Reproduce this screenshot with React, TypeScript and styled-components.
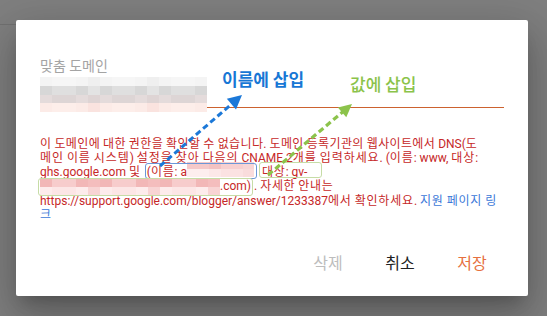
import React from "react";
import styled, { createGlobalStyle } from "styled-components";

const Global = createGlobalStyle`
  html, body { margin: 0; padding: 0; }
  body {
    width: 547px;
    height: 316px;
    overflow: hidden;
    background:
      linear-gradient(to bottom, transparent 24px, #717171 24px, #717171 25px, transparent 25px) no-repeat 0 0 / 16px 100%,
      #7f7f7f;
    font-family: "Roboto", "Noto Sans CJK KR", sans-serif;
  }
`;

const Page = styled.div`
  padding: 20px 0 0 16px;
`;

const Dialog = styled.div`
  position: relative;
  box-sizing: border-box;
  width: 512px;
  height: 276px;
  background: #fff;
  border-radius: 2px;
  box-shadow: 0 11px 15px -7px rgba(0, 0, 0, 0.2), 0 24px 38px 3px rgba(0, 0, 0, 0.14),
    0 9px 46px 8px rgba(0, 0, 0, 0.12);
  padding: 38px 24px 16px;
  display: flex;
  flex-direction: column;
`;

const FieldLabel = styled.div`
  font-size: 14px;
  line-height: 16px;
  color: #a4a4a4;
`;

const Field = styled.div`
  position: relative;
  height: 33px;
  border-bottom: 1px solid #cc622f;
`;

const FieldRedactWrap = styled.div`
  position: absolute;
  left: 0;
  top: 3px;
  line-height: 0;
`;

const RedactGrid = styled.span<{
  $cols: number;
  $rows: number;
  $w: number;
  $h: number;
  $mt: number;
  $mb: number;
}>`
  display: inline-grid;
  grid-template-columns: repeat(${(p) => p.$cols}, 1fr);
  grid-template-rows: repeat(${(p) => p.$rows}, 1fr);
  width: ${(p) => p.$w}px;
  height: ${(p) => p.$h}px;
  vertical-align: top;
  margin-top: ${(p) => p.$mt}px;
  margin-bottom: ${(p) => p.$mb}px;
`;

const Cell = styled.span``;

type RedactProps = {
  cols: number;
  rowColors: string[][];
  w: number;
  h: number;
  mt?: number;
  mb?: number;
};

function Redact({ cols, rowColors, w, h, mt = 0, mb = 0 }: RedactProps) {
  const cells: string[] = [];
  rowColors.forEach((palette, r) => {
    for (let c = 0; c < cols; c++) {
      const k = (c * 7 + r * 3 + ((c * c) % 5)) % palette.length;
      cells.push(palette[k]);
    }
  });
  return (
    <RedactGrid $cols={cols} $rows={rowColors.length} $w={w} $h={h} $mt={mt} $mb={mb}>
      {cells.map((col, i) => (
        <Cell key={i} style={{ background: col }} />
      ))}
    </RedactGrid>
  );
}

const ErrorText = styled.div`
  margin-top: 28.5px;
  font-size: 12px;
  line-height: 14.25px;
  color: #c62828;
  white-space: nowrap;
`;

const Line = styled.div<{ $hs: number }>`
  --hs: ${(p) => p.$hs}px;
`;

const Hangul = styled.span`
  letter-spacing: var(--hs);
`;

function Ko({ text }: { text: string }) {
  const parts = text.split(/([\uAC00-\uD7A3]+)/);
  return (
    <>
      {parts.map((p, i) => (i % 2 ? <Hangul key={i}>{p}</Hangul> : p))}
    </>
  );
}

/* annotation frame drawn over the text, so it does not move the words */
const Boxed = styled.span<{
  $color: string;
  $ml: number;
  $l: number;
  $r: number;
  $t: number;
  $b: number;
}>`
  position: relative;
  margin-left: ${(p) => p.$ml}px;
  &::before {
    content: "";
    position: absolute;
    left: ${(p) => p.$l}px;
    right: ${(p) => p.$r}px;
    top: ${(p) => p.$t}px;
    bottom: ${(p) => p.$b}px;
    border: 1.5px solid ${(p) => p.$color};
    border-radius: 3px;
    pointer-events: none;
  }
`;

const AfterBox = styled.span`
  margin-left: 3px;
`;

const Link = styled.a`
  color: #3b78d8;
  text-decoration: none;
`;

const Actions = styled.div`
  margin-top: auto;
  margin-right: -4px;
  display: flex;
  justify-content: flex-end;
`;

const ActionButton = styled.button<{ $tone: string }>`
  width: 72px;
  height: 36px;
  padding: 0;
  border: none;
  background: none;
  font-family: "Roboto", "Noto Sans CJK KR", sans-serif;
  font-size: 16px;
  color: ${(p) => p.$tone};
  cursor: pointer;
`;

const Overlay = styled.svg`
  position: absolute;
  left: 0;
  top: 0;
  width: 512px;
  height: 276px;
  pointer-events: none;
  overflow: visible;
`;

const Callout = styled.div<{ $x: number; $y: number; $color: string; $weight: number }>`
  position: absolute;
  left: ${(p) => p.$x}px;
  top: ${(p) => p.$y}px;
  font-family: "Noto Sans CJK KR", sans-serif;
  font-size: 17px;
  line-height: 17px;
  font-weight: ${(p) => p.$weight};
  color: ${(p) => p.$color};
  white-space: nowrap;
`;

const fieldRows = [
  ["#f4f4f4", "#f1f1f1", "#eeeeee", "#f6f6f6", "#efefef"],
  ["#dadada", "#dfdfdf", "#e3e3e3", "#d7d7d7", "#e6e6e6"],
  ["#ded4d4", "#e4dbdb", "#d9d0d0", "#e7e0e0", "#ddd5d5"],
  ["#fce9e5", "#fbe4e0", "#fdeeea", "#fae3df", "#fcebe7"],
];

const line3Rows = [
  ["#f5c9c9", "#f7d0d0", "#f3c2c2", "#f8d6d6"],
  ["#fbe2e2", "#fce8e8", "#f9dcdc", "#fdeeee"],
];

const line4Rows = [
  ["#f2b7b7", "#f5c3c3", "#efb0b0", "#f7cccc", "#f4bdbd"],
  ["#fadcdc", "#fce6e6", "#f8d4d4", "#fdecec", "#f9d8d8"],
];

type ArrowProps = {
  x1: number;
  y1: number;
  x2: number;
  y2: number;
  color: string;
  len: number;
  half: number;
  width: number;
};

function Arrow({ x1, y1, x2, y2, color, len, half, width }: ArrowProps) {
  const dx = x2 - x1;
  const dy = y2 - y1;
  const d = Math.hypot(dx, dy);
  const ux = dx / d;
  const uy = dy / d;
  const bx = x2 - ux * len;
  const by = y2 - uy * len;
  const px = -uy * half;
  const py = ux * half;
  return (
    <g>
      <line
        x1={x1}
        y1={y1}
        x2={bx + ux}
        y2={by + uy}
        stroke={color}
        strokeWidth={width}
        strokeDasharray="6 3.5"
      />
      <polygon points={`${x2},${y2} ${bx + px},${by + py} ${bx - px},${by - py}`} fill={color} />
    </g>
  );
}

export default function App() {
  return (
    <>
      <Global />
      <Page>
        <Dialog>
          <FieldLabel>맞춤 도메인</FieldLabel>
          <Field>
            <FieldRedactWrap>
              <Redact cols={14} rowColors={fieldRows} w={167} h={35} />
            </FieldRedactWrap>
          </Field>
          <ErrorText>
            <Line $hs={0.37}>
              <Ko text="이 도메인에 대한 권한을 확인할 수 없습니다. 도메인 등록기관의 웹사이트에서 DNS(도" />
            </Line>
            <Line $hs={0.92}>
              <Ko text="메인 이름 시스템) 설정을 찾아 다음의 CNAME 2개를 입력하세요. (이름: www, 대상:" />
            </Line>
            <Line $hs={0.8}>
              <Ko text="ghs.google.com 및 " />
              <Boxed $color="#6b97d8" $ml={3} $l={-1.5} $r={-3} $t={-2.4} $b={0.3}>
                <Ko text="(이름: a" />
                <Redact cols={6} rowColors={line3Rows} w={67} h={14.4} mt={-2.9} />
              </Boxed>
              <Boxed $color="#c6dca6" $ml={8} $l={-3} $r={-15} $t={-2.7} $b={0.8}>
                <Ko text="대상: gv-" />
              </Boxed>
            </Line>
            <Line $hs={0.7}>
              <Boxed $color="#c6dca6" $ml={0} $l={-2} $r={-1.5} $t={-1.5} $b={-2.3}>
                <Redact cols={15} rowColors={line4Rows} w={180} h={16} mt={-0.5} mb={-2.25} />
                .com)
              </Boxed>
              <AfterBox>
                <Ko text=". 자세한 안내는" />
              </AfterBox>
            </Line>
            <Line $hs={0.8}>
              <Ko text="https://support.google.com/blogger/answer/1233387에서 확인하세요. " />
              <Link href="#">
                <Ko text="지원 페이지 링" />
              </Link>
            </Line>
            <Line $hs={0}>
              <Link href="#">크</Link>
            </Line>
          </ErrorText>
          <Actions>
            <ActionButton $tone="#bdbdbd">삭제</ActionButton>
            <ActionButton $tone="#222222">취소</ActionButton>
            <ActionButton $tone="#e6703f">저장</ActionButton>
          </Actions>
          <Overlay viewBox="0 0 512 276">
            <Arrow x1={144} y1={146} x2={226} y2={75} color="#1b78d8" len={14} half={7} width={3} />
            <Arrow x1={252} y1={155} x2={336} y2={84} color="#8cc34b" len={13} half={6.5} width={3.2} />
          </Overlay>
          <Callout $x={206} $y={50} $color="#1877d5" $weight={700}>
            이름에 삽입
          </Callout>
          <Callout $x={334} $y={55} $color="#8bc34a" $weight={500}>
            값에 삽입
          </Callout>
        </Dialog>
      </Page>
    </>
  );
}
